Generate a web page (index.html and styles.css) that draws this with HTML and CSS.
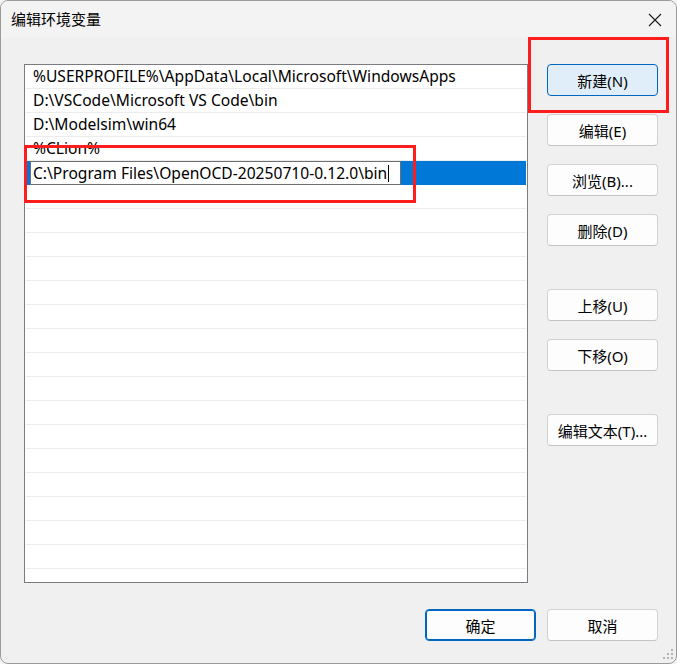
FILE: index.html
```html
<!DOCTYPE html>
<html lang="zh-CN">
<head>
<meta charset="utf-8">
<title>编辑环境变量</title>
<link rel="stylesheet" href="styles.css">
</head>
<body>
<div class="window">
  <div class="titlebar">
    <span class="title">编辑环境变量</span>
    <span class="close">
      <svg width="14" height="14" viewBox="0 0 14 14"><path d="M1 1 L13 13 M13 1 L1 13" stroke="#1a1a1a" stroke-width="1.1" fill="none"/></svg>
    </span>
  </div>
  <div class="main">
    <div class="list">
      <div class="row">%USERPROFILE%\AppData\Local\Microsoft\WindowsApps</div>
      <div class="row">D:\VSCode\Microsoft VS Code\bin</div>
      <div class="row">D:\Modelsim\win64</div>
      <div class="row">%CLion%</div>
      <div class="row selected"><div class="editbox">C:\Program Files\OpenOCD-20250710-0.12.0\bin<span class="caret"></span></div></div>
      <div class="row"></div>
      <div class="row"></div>
      <div class="row"></div>
      <div class="row"></div>
      <div class="row"></div>
      <div class="row"></div>
      <div class="row"></div>
      <div class="row"></div>
      <div class="row"></div>
      <div class="row"></div>
      <div class="row"></div>
      <div class="row"></div>
      <div class="row"></div>
      <div class="row"></div>
      <div class="row"></div>
      <div class="row"></div>
      <div class="row"></div>
    </div>
    <div class="buttons">
      <div class="btn focused">新建(N)</div>
      <div class="btn">编辑(E)</div>
      <div class="btn">浏览(B)...</div>
      <div class="btn">删除(D)</div>
      <div class="btn spaced">上移(U)</div>
      <div class="btn">下移(O)</div>
      <div class="btn spaced">编辑文本(T)...</div>
    </div>
  </div>
  <div class="footer">
    <div class="btn default">确定</div>
    <div class="btn">取消</div>
  </div>
  <div class="grip">
    <span class="dot d1"></span><span class="dot d2"></span><span class="dot d3"></span>
    <span class="dot d4"></span><span class="dot d5"></span><span class="dot d6"></span>
  </div>
  <div class="mark mark-new"></div>
  <div class="mark mark-edit"></div>
</div>
</body>
</html>
```
FILE: styles.css
```css
* { box-sizing: border-box; }
html, body { margin: 0; padding: 0; }
body {
  width: 677px;
  height: 664px;
  background: #f4f4f4;
  font-family: "Noto Sans", "Noto Sans CJK SC", sans-serif;
  font-size: 15px;
  color: #000;
  overflow: hidden;
}
.window {
  position: relative;
  width: 677px;
  height: 664px;
  border: 1px solid #9a9a9a;
  border-radius: 8px;
  background: #f0f0f0;
  overflow: hidden;
}
.titlebar {
  height: 36px;
  background: #f3f3f3;
  display: flex;
  align-items: center;
  justify-content: space-between;
  padding: 0 14px 0 10px;
}
.title {
  font-family: "Noto Sans CJK SC", sans-serif;
  font-size: 15px;
  line-height: 20px;
  margin-top: -1px;
}
.close { display: flex; width: 14px; height: 14px; margin-top: 1px; }
.main {
  display: flex;
  margin-top: 27px;
  padding-left: 23px;
  gap: 19px;
}
.list {
  width: 504px;
  height: 519px;
  border: 1px solid #7b7b82;
  background: #fff;
  padding: 0 1px;
  overflow: hidden;
}
.row {
  height: 24px;
  border-bottom: 1px solid #ececec;
  padding-left: 7px;
  line-height: 22px;
  font-size: 15.6px;
  white-space: nowrap;
}
.row.selected {
  background: #0078d7;
  border-bottom-color: #0078d7;
  padding-left: 4px;
}
.editbox {
  width: 371px;
  height: 24px;
  background: #fff;
  border: 1px solid #6f6f6f;
  padding-left: 2px;
  line-height: 21px;
  display: flex;
  align-items: center;
}
.caret {
  display: inline-block;
  width: 1px;
  height: 17px;
  background: #000;
  margin-left: 1px;
}
.buttons {
  display: flex;
  flex-direction: column;
  gap: 18px;
  width: 111px;
}
.btn {
  width: 111px;
  height: 32px;
  border: 1px solid #d2d2d2;
  border-bottom-color: #c4c4c4;
  border-radius: 4px;
  background: #fdfdfd;
  display: flex;
  align-items: center;
  justify-content: center;
  font-family: "Noto Sans", "Noto Sans CJK SC", sans-serif;
  font-size: 15px;
  white-space: nowrap;
}
.btn.spaced { margin-top: 25px; }
.btn.focused {
  background: #e0eef9;
  border: 1px solid #0067c0;
}
.btn.default {
  border: 1px solid #0067c0;
  box-shadow: inset 0 0 0 1px #0067c0;
}
.footer {
  display: flex;
  justify-content: flex-end;
  gap: 11px;
  margin-top: 26px;
  padding-right: 18px;
}
.grip {
  position: absolute;
  right: 2px;
  bottom: 2px;
  width: 12px;
  height: 12px;
}
.dot {
  position: absolute;
  width: 2px;
  height: 2px;
  background: #b3b3b3;
}
.d1 { right: 1px; top: 0; }
.d2 { right: 1px; top: 4px; }
.d3 { right: 5px; top: 4px; }
.d4 { right: 1px; top: 8px; }
.d5 { right: 5px; top: 8px; }
.d6 { right: 9px; top: 8px; }
.mark {
  position: absolute;
  border: 3px solid #ff1c1c;
  pointer-events: none;
}
.mark-new { left: 527px; top: 36px; width: 141px; height: 76px; }
.mark-edit { left: 23px; top: 144px; width: 392px; height: 58px; }
```
